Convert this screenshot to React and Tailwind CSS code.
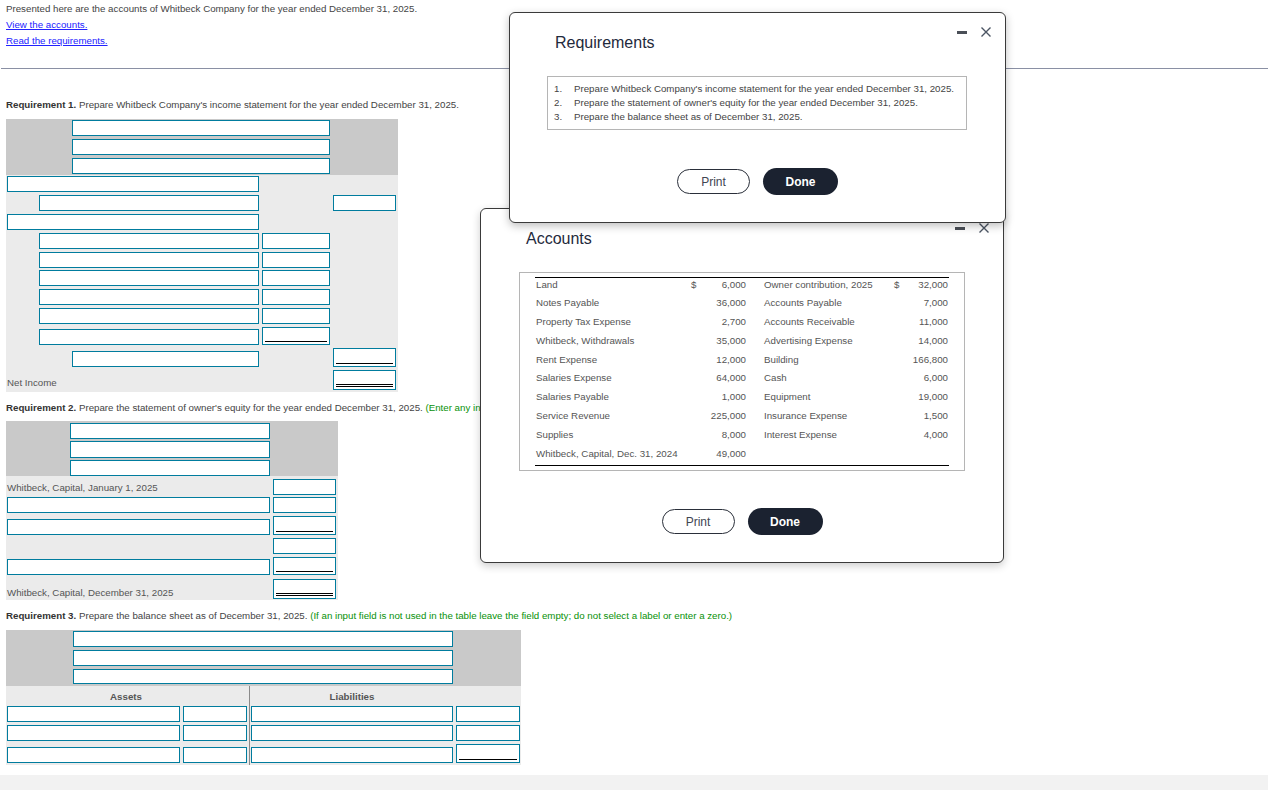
import React from 'react';

const Field = ({ className = '', line }) => (
    <div className={'bg-white border border-[#007c9e] flex flex-col justify-end px-[2px] pb-[2px] shrink-0 ' + className}>
        {line === 'single' && <div className="border-b border-black" />}
        {line === 'double' && <div className="border-b-[3px] border-double border-black" />}
    </div>
);

// one row of the income statement: label, inner amount, outer amount
const IncomeRow = ({ height, labelWidth, mid, right, children }) => (
    <div className={'flex items-end ' + height}>
        <div className="w-[256px] flex justify-end pr-[3px]">
            {labelWidth ? <Field className={labelWidth + ' h-[16px]'} /> : <div className="w-full pl-[1px]">{children}</div>}
        </div>
        <div className="w-[71px]">{mid}</div>
        <div className="w-[63px]">{right}</div>
    </div>
);

const EquityRow = ({ height, field, right, line, rightHeight, children }) => (
    <div className={'flex items-end ' + height}>
        <div className="w-[267px] pl-[1px]">
            {field ? <Field className="w-[263px] h-[16px]" /> : children}
        </div>
        {right && <Field className={'w-[63px] ' + rightHeight} line={line} />}
    </div>
);

const CloseIcons = () => (
    <>
        <div className="absolute right-[38px] top-[18px] w-[10px] h-[3px] bg-[#4a4f57]" />
        <svg className="absolute right-[13px] top-[13px] w-[12px] h-[12px]" viewBox="0 0 12 12" fill="none" stroke="#4b5563" strokeWidth="1.4">
            <path d="M1.5 1.5 10.5 10.5M10.5 1.5 1.5 10.5" />
        </svg>
    </>
);

const ModalButtons = () => (
    <div className="flex items-center justify-center gap-[13px]">
        <button className="w-[73px] h-[25px] rounded-full border border-[#2a2f3a] bg-white text-[12px] text-[#3f4652]">Print</button>
        <button className="w-[75px] h-[27px] rounded-full bg-[#1b2230] text-[12px] font-bold text-white">Done</button>
    </div>
);

const accounts = [
    ['Land', '$', '6,000', 'Owner contribution, 2025', '$', '32,000'],
    ['Notes Payable', '', '36,000', 'Accounts Payable', '', '7,000'],
    ['Property Tax Expense', '', '2,700', 'Accounts Receivable', '', '11,000'],
    ['Whitbeck, Withdrawals', '', '35,000', 'Advertising Expense', '', '14,000'],
    ['Rent Expense', '', '12,000', 'Building', '', '166,800'],
    ['Salaries Expense', '', '64,000', 'Cash', '', '6,000'],
    ['Salaries Payable', '', '1,000', 'Equipment', '', '19,000'],
    ['Service Revenue', '', '225,000', 'Insurance Expense', '', '1,500'],
    ['Supplies', '', '8,000', 'Interest Expense', '', '4,000'],
    ['Whitbeck, Capital, Dec. 31, 2024', '', '49,000', '', '', ''],
];

export default function App() {
    return (
        <div className="relative h-[790px] w-full overflow-hidden bg-white font-['Liberation_Sans',Arial,sans-serif] text-[9.73px] text-[#444]">
            <div className="pl-[6px] pt-[3px] leading-[12px]">
                <p className="h-[16px]">Presented here are the accounts of Whitbeck Company for the year ended December 31, 2025.</p>
                <p className="h-[16px] text-[#2222ff] underline">View the accounts.</p>
                <p className="h-[16px] text-[#2222ff] underline">Read the requirements.</p>
            </div>
            <div className="mt-[17px] ml-[1px] border-t border-[#8a90a4]" />

            <p className="mt-[30px] ml-[6px] h-[14px] leading-[12px]">
                <b className="text-[#333]">Requirement 1.</b> Prepare Whitbeck Company's income statement for the year ended December 31, 2025.
            </p>
            <div className="mt-[6px] ml-[6px] w-[392px] bg-[#ebebeb]">
                <div className="h-[56px] bg-[#c9c9c9] pl-[66px] pt-[1px] flex flex-col gap-[3px]">
                    <Field className="w-[258px] h-[16px]" />
                    <Field className="w-[258px] h-[16px]" />
                    <Field className="w-[258px] h-[16px]" />
                </div>
                <IncomeRow height="h-[17px]" labelWidth="w-[252px]" />
                <IncomeRow height="h-[19px]" labelWidth="w-[220px]" right={<Field className="w-[63px] h-[16px]" />} />
                <IncomeRow height="h-[19px]" labelWidth="w-[252px]" />
                <IncomeRow height="h-[19px]" labelWidth="w-[220px]" mid={<Field className="w-[68px] h-[16px]" />} />
                <IncomeRow height="h-[19px]" labelWidth="w-[220px]" mid={<Field className="w-[68px] h-[16px]" />} />
                <IncomeRow height="h-[18px]" labelWidth="w-[220px]" mid={<Field className="w-[68px] h-[16px]" />} />
                <IncomeRow height="h-[19px]" labelWidth="w-[220px]" mid={<Field className="w-[68px] h-[16px]" />} />
                <IncomeRow height="h-[19px]" labelWidth="w-[220px]" mid={<Field className="w-[68px] h-[16px]" />} />
                <IncomeRow height="h-[21px]" labelWidth="w-[220px]" mid={<Field className="w-[68px] h-[18px]" line="single" />} />
                <IncomeRow height="h-[22px]" labelWidth="w-[187px]" right={<Field className="w-[63px] h-[19px]" line="single" />} />
                <IncomeRow height="h-[23px]" right={<Field className="w-[63px] h-[20px]" line="double" />}>
                    <span className="block pb-[1px] leading-[12px] text-[#555]">Net Income</span>
                </IncomeRow>
                <div className="h-[2px]" />
            </div>

            <p className="mt-[10px] ml-[6px] h-[19px] leading-[12px] whitespace-nowrap">
                <b className="text-[#333]">Requirement 2.</b> Prepare the statement of owner's equity for the year ended December 31, 2025. <span className="text-[#089108]">(Enter any input</span>
            </p>
            <div className="ml-[6px] w-[332px] bg-[#ebebeb]">
                <div className="h-[55px] bg-[#c9c9c9] pl-[64px] pt-[2px] flex flex-col gap-[2px]">
                    <Field className="w-[200px] h-[16px]" />
                    <Field className="w-[200px] h-[17px]" />
                    <Field className="w-[200px] h-[16px]" />
                </div>
                <EquityRow height="h-[19px]" right rightHeight="h-[16px]">
                    <span className="block pb-[1px] leading-[12px] text-[#555]">Whitbeck, Capital, January 1, 2025</span>
                </EquityRow>
                <EquityRow height="h-[18px]" field right rightHeight="h-[16px]" />
                <EquityRow height="h-[22px]" field right rightHeight="h-[19px]" line="single" />
                <EquityRow height="h-[19px]" right rightHeight="h-[16px]" />
                <EquityRow height="h-[21px]" field right rightHeight="h-[18px]" line="single" />
                <EquityRow height="h-[24px]" right rightHeight="h-[20px]" line="double">
                    <span className="block leading-[12px] text-[#555]">Whitbeck, Capital, December 31, 2025</span>
                </EquityRow>
                <div className="h-[1px]" />
            </div>

            <p className="mt-[10px] ml-[6px] h-[20px] leading-[12px] whitespace-nowrap">
                <b className="text-[#333]">Requirement 3.</b> Prepare the balance sheet as of December 31, 2025. <span className="text-[#089108]">(If an input field is not used in the table leave the field empty; do not select a label or enter a zero.)</span>
            </p>
            <div className="ml-[6px] w-[515px] bg-[#ebebeb]">
                <div className="h-[56px] bg-[#c9c9c9] pl-[67px] pt-[1px] flex flex-col gap-[3px]">
                    <Field className="w-[380px] h-[16px]" />
                    <Field className="w-[380px] h-[16px]" />
                    <Field className="w-[380px] h-[15px]" />
                </div>
                <div className="flex">
                    <div className="w-[243px] pl-[1px]">
                        <div className="h-[20px] w-[238px] pt-[1px] text-center font-bold leading-[20px] text-[#555]">Assets</div>
                        <div className="flex gap-[3px] h-[16px]"><Field className="w-[173px] h-[16px]" /><Field className="w-[64px] h-[16px]" /></div>
                        <div className="flex gap-[3px] mt-[3px] h-[16px]"><Field className="w-[173px] h-[16px]" /><Field className="w-[64px] h-[16px]" /></div>
                        <div className="flex gap-[3px] mt-[6px] h-[18px]"><Field className="w-[173px] h-[16px]" /><Field className="w-[64px] h-[16px]" /></div>
                    </div>
                    <div className="w-[272px] border-l border-[#8a8a8a] pl-[1px]">
                        <div className="h-[20px] w-[202px] pt-[1px] text-center font-bold leading-[20px] text-[#555]">Liabilities</div>
                        <div className="flex gap-[3px] h-[16px]"><Field className="w-[202px] h-[16px]" /><Field className="w-[64px] h-[16px]" /></div>
                        <div className="flex gap-[3px] mt-[3px] h-[16px]"><Field className="w-[202px] h-[16px]" /><Field className="w-[64px] h-[16px]" /></div>
                        <div className="flex gap-[3px] items-end mt-[3px] h-[21px] pb-[2px]"><Field className="w-[202px] h-[16px]" /><Field className="w-[64px] h-[19px]" line="single" /></div>
                    </div>
                </div>
            </div>
            <div className="absolute left-0 right-0 bottom-0 h-[15px] bg-[#f2f2f2]" />

            {/* floating windows */}
            <div className="absolute left-[480px] top-[208px] w-[524px] h-[355px] bg-white border border-[#3a3a3a] rounded-[6px] shadow-[0_3px_8px_rgba(0,0,0,0.2)]">
                <CloseIcons />
                <h2 className="ml-[45px] mt-[20px] h-[20px] text-[16px] leading-[20px] text-[#1f2a3c]">Accounts</h2>
                <div className="ml-[38px] mt-[23px] w-[446px] h-[199px] border border-[#b5b5b5] px-[15px] pt-[4px]">
                    <div className="border-y border-black h-[189px]">
                        {accounts.map((row) => (
                            <div key={row[0]} className="flex h-[18.8px] leading-[12px] pt-[0.5px] text-[#555]">
                                <div className="w-[156px] pl-[1px]">{row[0]}</div>
                                <div className="w-[55px] flex justify-between"><span>{row[1]}</span><span>{row[2]}</span></div>
                                <div className="w-[18px]" />
                                <div className="w-[130px]">{row[3]}</div>
                                <div className="w-[54px] flex justify-between"><span>{row[4]}</span><span>{row[5]}</span></div>
                            </div>
                        ))}
                    </div>
                </div>
                <div className="mt-[37px]"><ModalButtons /></div>
            </div>

            <div className="absolute left-[509px] top-[12px] w-[497px] h-[211px] bg-white border border-[#3a3a3a] rounded-[6px] shadow-[0_3px_8px_rgba(0,0,0,0.25)]">
                <CloseIcons />
                <h2 className="ml-[45px] mt-[20px] h-[20px] text-[16px] leading-[20px] text-[#1f2a3c]">Requirements</h2>
                <div className="ml-[37px] mt-[23px] w-[420px] h-[54px] border border-[#b5b5b5] pl-[6px] pt-[6px] leading-[12px] text-[#444]">
                    <div className="flex h-[14px]"><span className="w-[20px]">1.</span>Prepare Whitbeck Company's income statement for the year ended December 31, 2025.</div>
                    <div className="flex h-[14px]"><span className="w-[20px]">2.</span>Prepare the statement of owner's equity for the year ended December 31, 2025.</div>
                    <div className="flex h-[14px]"><span className="w-[20px]">3.</span>Prepare the balance sheet as of December 31, 2025.</div>
                </div>
                <div className="mt-[38px]"><ModalButtons /></div>
            </div>
        </div>
    );
}
